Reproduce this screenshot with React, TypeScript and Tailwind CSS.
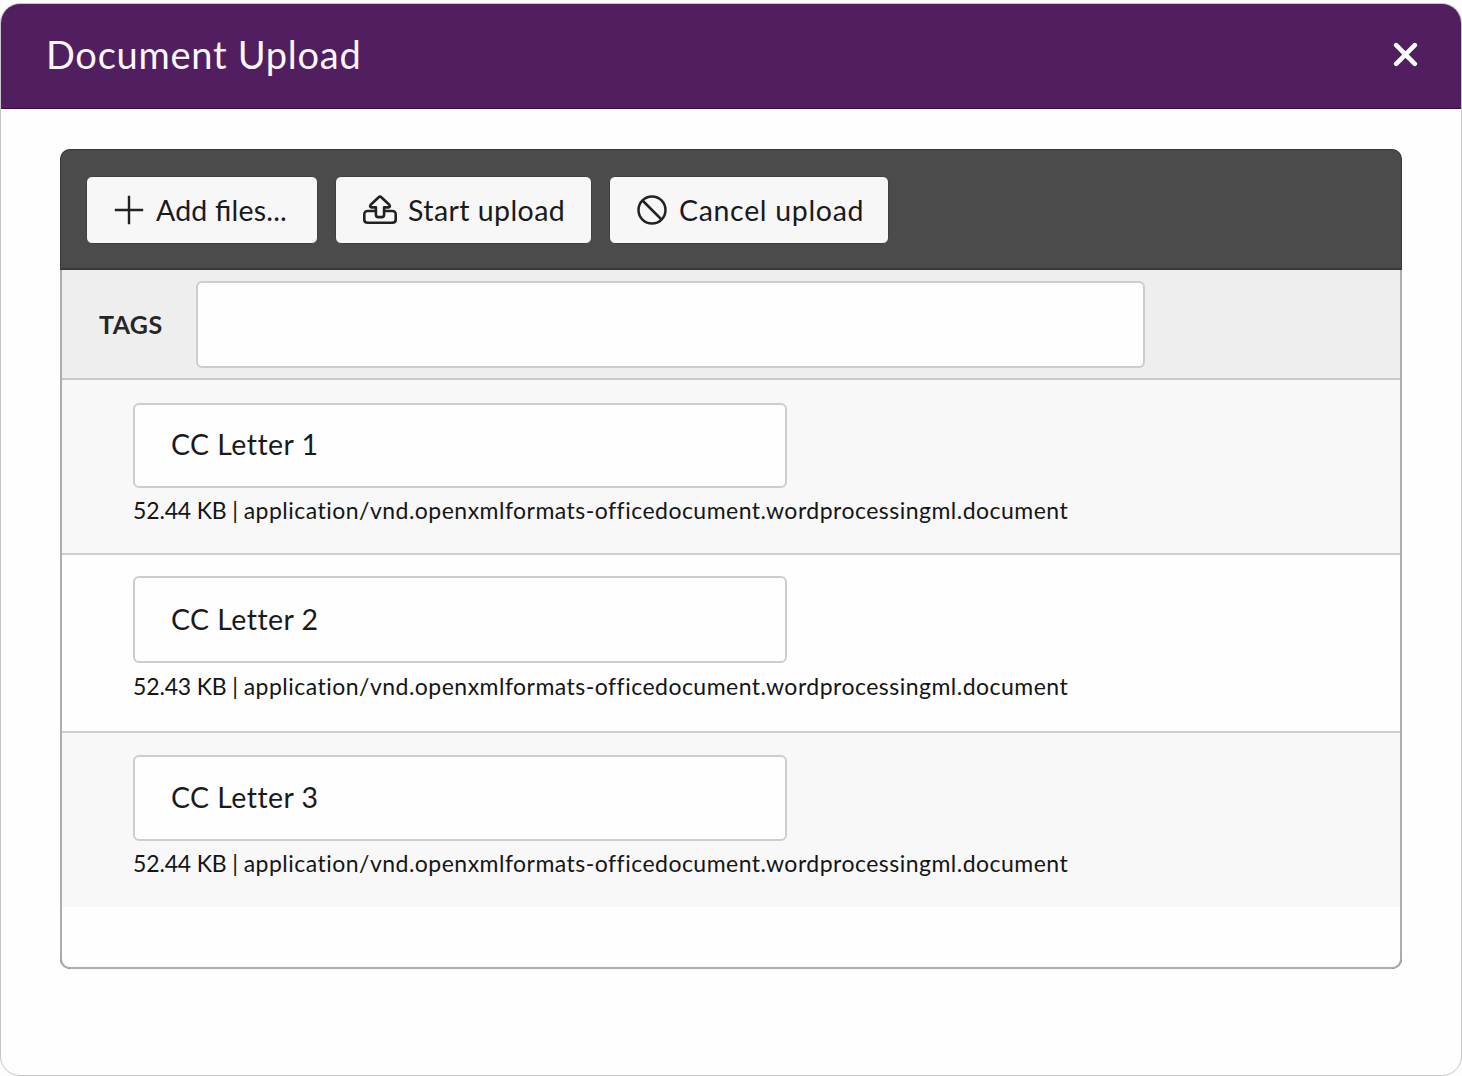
import React, { useState, ChangeEvent } from 'react';

interface UploadFile {
    id: number;
    name: string;
    size: string;
    type: string;
}

const DOCX = 'application/vnd.openxmlformats-officedocument.wordprocessingml.document';

const initialFiles: UploadFile[] = [
    { id: 1, name: 'CC Letter 1', size: '52.44 KB', type: DOCX },
    { id: 2, name: 'CC Letter 2', size: '52.43 KB', type: DOCX },
    { id: 3, name: 'CC Letter 3', size: '52.44 KB', type: DOCX },
];

// Row heights and input heights differ slightly from row to row
const rowStyles = [
    { row: 'h-[175px] bg-[#f8f8f8] border-b-2 pt-[23px]', input: 'h-[85px] pb-[4px]', info: 'mt-[5px]' },
    { row: 'h-[178px] bg-[#fefefe] border-b-2 pt-[21px]', input: 'h-[87px] pb-[2px]', info: 'mt-[6px]' },
    { row: 'h-[174px] bg-[#f8f8f8] pt-[22px]', input: 'h-[86px] pb-[2px]', info: 'mt-[5px]' },
];

const PlusIcon = () => (
    <svg width="30" height="30" viewBox="0 0 30 30" fill="none" stroke="#222" strokeWidth="2.4">
        <path d="M15 .8v28.4M.8 15h28.4" />
    </svg>
);

const UploadIcon = () => (
    <svg width="34" height="30" viewBox="0 0 34 30" fill="none" stroke="#222" strokeWidth="2.6" strokeLinecap="round" strokeLinejoin="round">
        <path d="M17 1.6c.5 0 .9.2 1.3.6l8 7.6c1.2 1.2.6 2.6-1 2.6h-4.200v7.300c0 1.600-.9 2.400-2.400 2.400h-3.400c-1.500 0-2.400-.8-2.400-2.400v-7.300H8.700c-1.600 0-2.200-1.400-1-2.600l8-7.600c.4-.4.8-.6 1.300-.6z" />
        <path d="M12.900 16H4.800C2.600 16 1.300 17.300 1.300 19.300v5.200c0 2 1.300 3.300 3.500 3.300h24.400c2.200 0 3.500-1.300 3.500-3.300v-5.200c0-2-1.300-3.300-3.500-3.300h-8.100" />
    </svg>
);

const CancelIcon = () => (
    <svg width="30" height="30" viewBox="0 0 30 30" fill="none" stroke="#222" strokeWidth="2.5">
        <circle cx="15" cy="15" r="13.500" />
        <path d="M5.500 5.500l19 19" />
    </svg>
);

const App: React.FC = () => {
    const [files, setFiles] = useState<UploadFile[]>(initialFiles);
    const [tags, setTags] = useState('');

    const handleRename = (id: number, e: ChangeEvent<HTMLInputElement>) => {
        setFiles(files.map((file) => (file.id === id ? { ...file, name: e.target.value } : file)));
    };

    return (
        <div className="h-[1076px] w-[1462px] overflow-hidden bg-[#fdfdfd] pt-[3px] font-['Lato',sans-serif] text-[#1a1a1a]">
            <div className="h-[1073px] overflow-hidden rounded-[20px] border border-[#c6c6c6] bg-[#fefefe]">
                <header className="flex h-[105px] items-center justify-between border-b border-[#3c0b4c] bg-[#511e60] pr-[43px] pb-[4px] pl-[45px]">
                    <h1 className="text-[38px] leading-none tracking-[0.730px] text-[#fbf7fc]">Document Upload</h1>
                    <button type="button" aria-label="Close">
                        <svg width="25" height="25" viewBox="0 0 25 25" stroke="#fff" strokeWidth="4.600" strokeLinecap="round">
                            <path d="M3.200 3.200l18.600 18.600M21.800 3.200L3.200 21.800" />
                        </svg>
                    </button>
                </header>

                <div className="mx-[59px] mt-10 h-[820px] overflow-hidden rounded-[10px] bg-[#4b4b4b]">
                    <div className="flex h-[121px] gap-[17px] rounded-t-[10px] border border-b-2 border-[#383838] pt-[26px] pl-[25px]">
                        <button type="button" className="flex h-[68px] w-[232px] items-center gap-[12px] rounded-[6px] border border-[#404040] bg-[#f7f7f7] pb-px pl-[27px]">
                            <PlusIcon />
                            <span className="pt-[2px] text-[28.500px] tracking-[0.200px] [font-feature-settings:'liga']">Add files...</span>
                        </button>
                        <button type="button" className="flex h-[68px] w-[257px] items-center gap-[11px] rounded-[6px] border border-[#404040] bg-[#f7f7f7] pb-px pl-[27px]">
                            <UploadIcon />
                            <span className="pt-[2px] text-[28.500px] tracking-[0.430px]">Start upload</span>
                        </button>
                        <button type="button" className="flex h-[68px] w-[280px] items-center gap-[12px] rounded-[6px] border border-[#404040] bg-[#f7f7f7] pb-px pl-[27px]">
                            <CancelIcon />
                            <span className="pt-[2px] text-[28.500px] tracking-[0.670px]">Cancel upload</span>
                        </button>
                    </div>

                    <div className="h-[699px] overflow-hidden rounded-b-[10px] border-2 border-t-0 border-[#adadad] bg-[#fefefe]">
                        <div className="flex h-[110px] items-center border-b-2 border-[#c9c9c9] bg-[#eeeeee] pl-[36px]">
                            <label htmlFor="tags" className="w-[98px] pt-[2px] pl-px text-[25px] font-bold tracking-[0.400px] text-[#262626]">TAGS</label>
                            <input
                                id="tags"
                                type="text"
                                value={tags}
                                onChange={(e) => setTags(e.target.value)}
                                className="mt-px h-[87px] w-[949px] rounded-[6px] border-2 border-[#cdcdcd] bg-[#fefefe] px-9 text-[28px] focus:outline-none"
                            />
                        </div>

                        {files.map((file, i) => (
                            <div key={file.id} className={`border-[#cfcfcf] pl-[71px] ${rowStyles[i].row}`}>
                                <input
                                    type="text"
                                    value={file.name}
                                    onChange={(e) => handleRename(file.id, e)}
                                    className={`block w-[654px] rounded-[6px] border-2 border-[#cdcdcd] bg-[#fefefe] px-9 text-[28.500px] tracking-[0.450px] focus:outline-none ${rowStyles[i].input}`}
                                />
                                <p className={`text-[23px] leading-[34px] text-[#151515] ${rowStyles[i].info}`}>
                                    <span className="tracking-[-0.150px]">{file.size} | </span>
                                    <span className="tracking-[0.480px]">{file.type}</span>
                                </p>
                            </div>
                        ))}
                    </div>
                </div>
            </div>
        </div>
    );
};

export default App;
